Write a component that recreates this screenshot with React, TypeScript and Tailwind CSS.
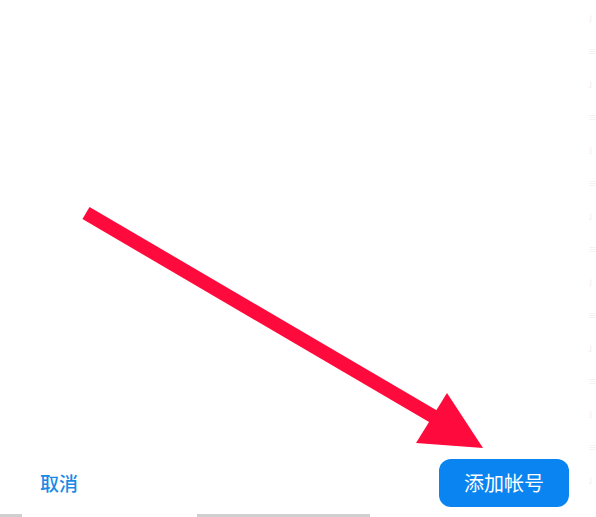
export default function App() {
  return (
    <div
      className="relative h-[517px] w-[596px] overflow-hidden bg-white"
      style={{ fontFamily: '"Noto Sans CJK SC", "Noto Sans", sans-serif' }}
    >
      {/* Arrow */}
      <svg className="absolute left-0 top-0" width="596" height="517" viewBox="0 0 596 517">
        <line x1="86" y1="213" x2="436" y2="418" stroke="#ff0a3c" strokeWidth="14" />
        <polygon points="447,393 416,443 483,448" fill="#ff0a3c" />
      </svg>

      {/* Right edge faint marks */}
      <div className="absolute right-0 top-0 flex w-[8px] flex-col gap-[24px] pt-[14px] text-[9px] leading-none text-[#ececec]">
        {Array.from({ length: 15 }).map((_, i) => (
          <span key={i}>{i % 2 ? "≡" : "˩"}</span>
        ))}
      </div>

      {/* Bottom action row */}
      <div className="absolute bottom-[10px] left-0 right-0 flex items-center justify-between pl-[40px] pr-[27px]">
        <span className="text-[19px] font-medium text-[#1a8ae6]">取消</span>
        <button className="flex h-[48px] w-[130px] items-center justify-center rounded-[12px] bg-[#0a84f0] text-[20px] text-white">
          添加帐号
        </button>
      </div>

      {/* Bottom gray bars */}
      <div className="absolute bottom-0 left-0 h-[3px] w-[22px] bg-[#cfcfcf]" />
      <div className="absolute bottom-0 left-[197px] h-[3px] w-[173px] bg-[#cfcfcf]" />
    </div>
  );
}
